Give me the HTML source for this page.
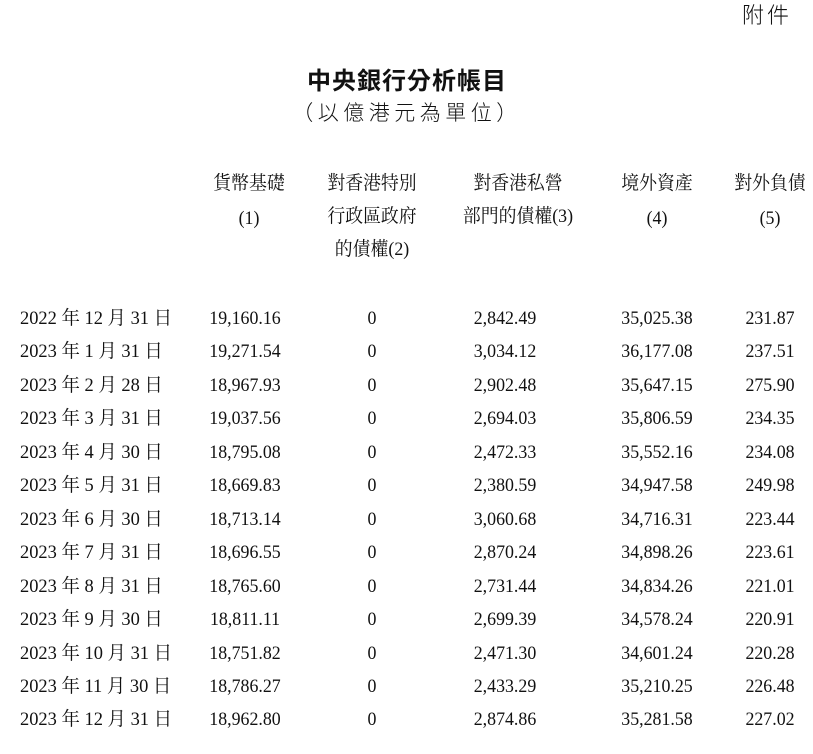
<!DOCTYPE html>
<html><head><meta charset="utf-8"><style>
body{margin:0;width:813px;height:754px;background:#fff;position:relative;overflow:hidden;font-family:"Liberation Serif","Noto Serif CJK SC","Noto Sans CJK TC",serif;color:#111;}
.a{position:absolute;white-space:nowrap;line-height:1;}
.c{transform:translateX(-50%) scaleX(0.94);}
.h{font-size:19px;}
.d{font-size:19px;left:20px;transform-origin:left;transform:scaleX(0.97);}
.n{font-size:19px;}
</style></head><body>
<div class="a" style="left:742px;top:3px;font-size:22px;font-family:'Noto Sans CJK TC',sans-serif;letter-spacing:3px;font-weight:300">附件</div>
<div class="a" style="left:407px;top:67px;font-size:24px;font-weight:bold;font-family:'Noto Sans CJK TC',sans-serif;letter-spacing:1px;transform:translateX(-50%)">中央銀行分析帳目</div>
<div class="a" style="left:407px;top:102px;font-size:21px;font-family:'Noto Sans CJK TC',sans-serif;letter-spacing:4.5px;font-weight:300;transform:translateX(-50%)">（以億港元為單位）</div>

<div class="a c h" style="left:249px;top:174px">貨幣基礎</div>
<div class="a c h" style="left:249px;top:209px">(1)</div>
<div class="a c h" style="left:372px;top:174px">對香港特別</div>
<div class="a c h" style="left:372px;top:207px">行政區政府</div>
<div class="a c h" style="left:372px;top:240px">的債權(2)</div>
<div class="a c h" style="left:518px;top:174px">對香港私營</div>
<div class="a c h" style="left:518px;top:207px">部門的債權(3)</div>
<div class="a c h" style="left:657px;top:174px">境外資產</div>
<div class="a c h" style="left:657px;top:209px">(4)</div>
<div class="a c h" style="left:770px;top:174px">對外負債</div>
<div class="a c h" style="left:770px;top:209px">(5)</div>

<div id="rows"></div>
<script>
var data=[
["2022 年 12 月 31 日","19,160.16","2,842.49","35,025.38","231.87"],
["2023 年 1 月 31 日","19,271.54","3,034.12","36,177.08","237.51"],
["2023 年 2 月 28 日","18,967.93","2,902.48","35,647.15","275.90"],
["2023 年 3 月 31 日","19,037.56","2,694.03","35,806.59","234.35"],
["2023 年 4 月 30 日","18,795.08","2,472.33","35,552.16","234.08"],
["2023 年 5 月 31 日","18,669.83","2,380.59","34,947.58","249.98"],
["2023 年 6 月 30 日","18,713.14","3,060.68","34,716.31","223.44"],
["2023 年 7 月 31 日","18,696.55","2,870.24","34,898.26","223.61"],
["2023 年 8 月 31 日","18,765.60","2,731.44","34,834.26","221.01"],
["2023 年 9 月 30 日","18,811.11","2,699.39","34,578.24","220.91"],
["2023 年 10 月 31 日","18,751.82","2,471.30","34,601.24","220.28"],
["2023 年 11 月 30 日","18,786.27","2,433.29","35,210.25","226.48"],
["2023 年 12 月 31 日","18,962.80","2,874.86","35,281.58","227.02"]];
var h="";
data.forEach(function(r,i){
 var t=(309+i*33.45).toFixed(1);
 h+='<div class="a d" style="top:'+t+'px">'+r[0]+'</div>';
 h+='<div class="a c n" style="left:245px;top:'+t+'px">'+r[1]+'</div>';
 h+='<div class="a c n" style="left:372px;top:'+t+'px">0</div>';
 h+='<div class="a c n" style="left:505px;top:'+t+'px">'+r[2]+'</div>';
 h+='<div class="a c n" style="left:657px;top:'+t+'px">'+r[3]+'</div>';
 h+='<div class="a c n" style="left:770px;top:'+t+'px">'+r[4]+'</div>';
});
document.getElementById("rows").innerHTML=h;
</script>
</body></html>
